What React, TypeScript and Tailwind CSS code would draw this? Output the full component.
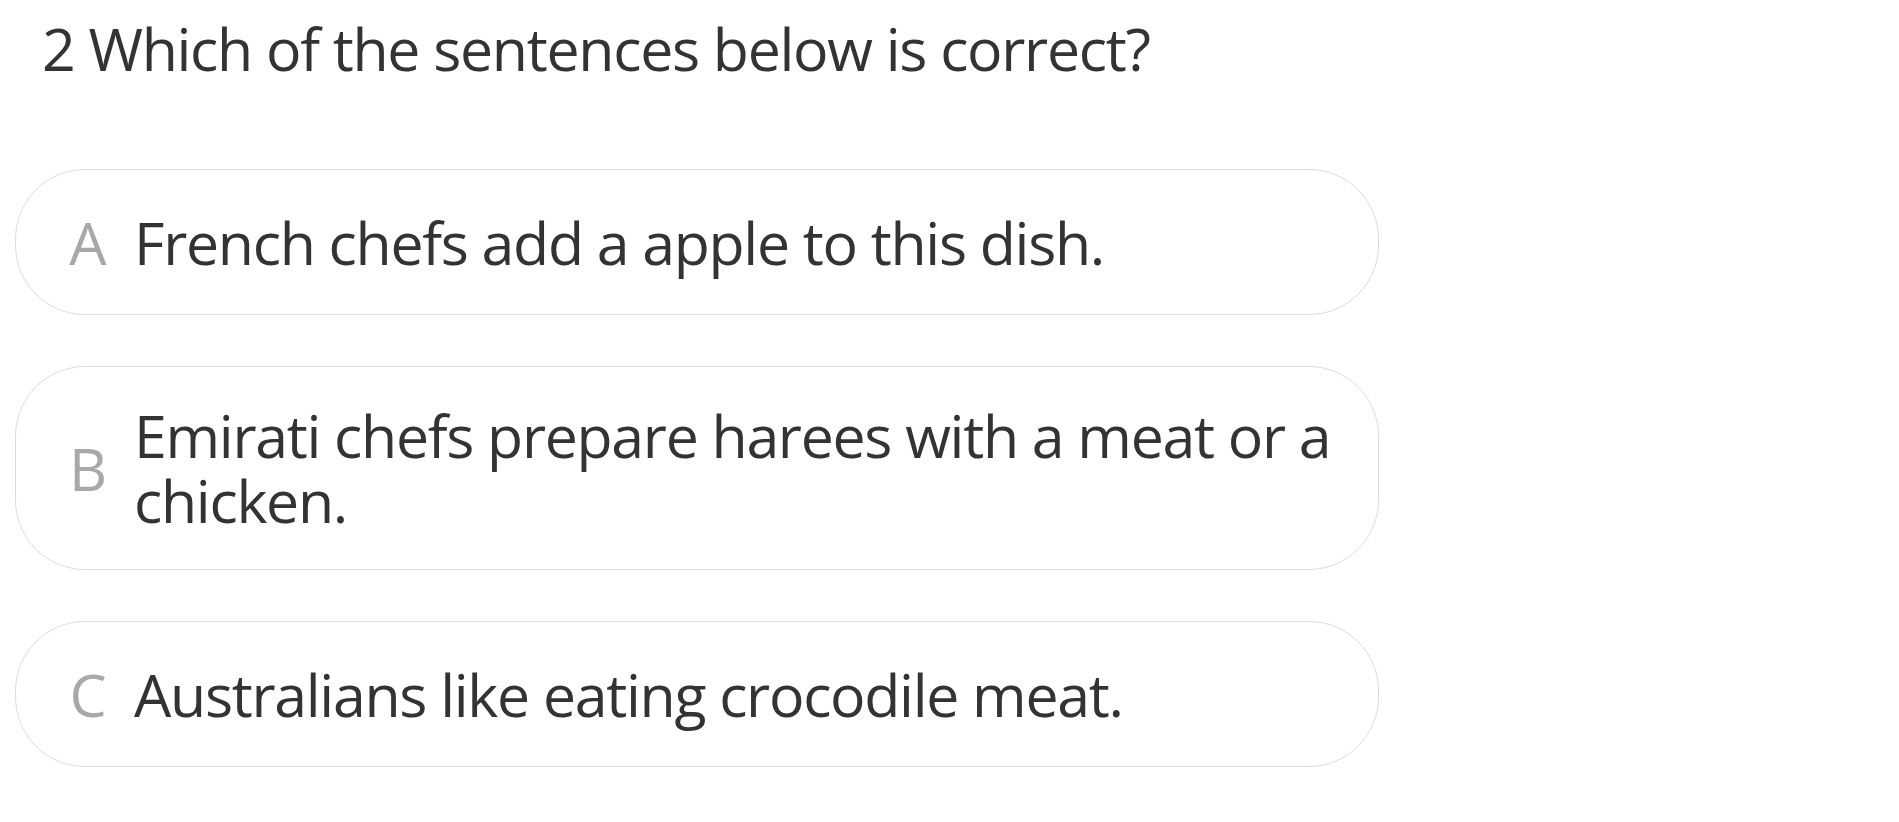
import React from "react";

const options = [
  { letter: "A", text: "French chefs add a apple to this dish." },
  { letter: "B", text: "Emirati chefs prepare harees with a meat or a chicken." },
  { letter: "C", text: "Australians like eating crocodile meat." },
];

export default function App() {
  return (
    <div className="min-h-screen w-full bg-white font-['Open_Sans',sans-serif] text-[#333]">
      <div className="pl-[42px] pt-[16px] text-[59px] leading-[65px] tracking-[-1.3px]">
        2 Which of the sentences below is correct?
      </div>
      <div className="mt-[88px] ml-[15px] flex w-[1364px] flex-col gap-[51px]">
        {options.map((o) => (
          <div
            key={o.letter}
            className="flex min-h-[146px] items-center rounded-[70px] border border-[#dcdcdc] py-[36px] pl-[44px] pr-[40px]"
          >
            <div className="w-[56px] shrink-0 text-center text-[59px] leading-[65px] text-[#a8a8a8]">
              {o.letter}
            </div>
            <div className="ml-[18px] text-[59px] leading-[65px] tracking-[-1.3px]">{o.text}</div>
          </div>
        ))}
      </div>
    </div>
  );
}
